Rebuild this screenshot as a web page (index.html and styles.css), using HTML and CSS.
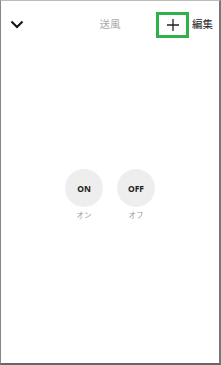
FILE: index.html
```html
<!DOCTYPE html>
<html lang="ja">
<head>
<meta charset="utf-8">
<link rel="stylesheet" href="styles.css">
</head>
<body>
<div class="frame">
  <div class="header">
    <div class="left">
      <svg class="chev" width="14" height="9" viewBox="0 0 14 9"><path d="M1.5 1.5 L7 7 L12.5 1.5" fill="none" stroke="#111" stroke-width="2"/></svg>
    </div>
    <div class="title">送風</div>
    <div class="right">
      <div class="addbox">
        <svg width="14" height="14" viewBox="0 0 14 14"><path d="M7 1 V13 M1 7 H13" stroke="#222" stroke-width="1.3"/></svg>
      </div>
      <div class="edit">編集</div>
    </div>
  </div>
  <div class="content">
    <div class="btns">
      <div class="item">
        <div class="circle">ON</div>
        <div class="label">オン</div>
      </div>
      <div class="item">
        <div class="circle">OFF</div>
        <div class="label">オフ</div>
      </div>
    </div>
  </div>
</div>
</body>
</html>
```

FILE: styles.css
```css
html, body {
  margin: 0;
  padding: 0;
  background: #fff;
}
.frame {
  box-sizing: border-box;
  width: 221px;
  height: 365px;
  border-top: 1px solid #bbb;
  border-left: 1px solid #888;
  border-right: 2px solid #777;
  border-bottom: 2px solid #666;
  font-family: "Noto Sans CJK JP", "Noto Sans", sans-serif;
  display: flex;
  flex-direction: column;
}
.header {
  display: grid;
  grid-template-columns: 1fr auto 1fr;
  align-items: center;
  height: 47px;
}
.left {
  padding-left: 9px;
  display: flex;
  align-items: center;
}
.chev { display: block; }
.title {
  font-size: 10.5px;
  color: #aaa;
  line-height: 1;
}
.right {
  display: flex;
  justify-content: flex-end;
  align-items: center;
  padding-right: 6px;
}
.addbox {
  box-sizing: border-box;
  width: 33px;
  height: 26px;
  border: 3.5px solid #2fb049;
  display: flex;
  align-items: center;
  justify-content: center;
  margin-right: 3px;
}
.addbox svg { display: block; }
.edit {
  font-size: 10.5px;
  color: #222;
  line-height: 1;
}
.content {
  flex: 1;
  display: flex;
  justify-content: center;
  padding-top: 121px;
}
.btns {
  display: flex;
  gap: 14px;
}
.item {
  display: flex;
  flex-direction: column;
  align-items: center;
}
.circle {
  width: 38px;
  height: 38px;
  border-radius: 50%;
  background: #eeeeee;
  display: flex;
  align-items: center;
  justify-content: center;
  font-family: "Noto Sans", sans-serif;
  font-weight: 700;
  font-size: 8.5px;
  color: #222;
}
.label {
  margin-top: 3px;
  font-size: 7.5px;
  color: #999;
  line-height: 10px;
}
```
